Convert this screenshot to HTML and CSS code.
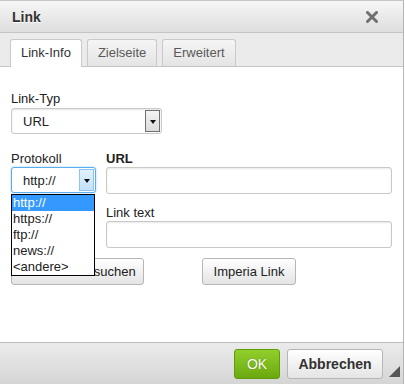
FILE: index.html
```html
<!DOCTYPE html>
<html lang="de">
<head>
    <meta charset="UTF-8">
    <title>Link</title>
    <link rel="stylesheet" href="styles.css">
</head>
<body>
    <div class="dialog">
        <!-- Titelleiste -->
        <div class="title-bar">
            <span class="title">Link</span>
            <svg class="close" width="12" height="12" viewBox="0 0 12 12">
                <path d="M1.5 1.5 L10.5 10.5 M10.5 1.5 L1.5 10.5" stroke="#707070" stroke-width="3" stroke-linecap="round"/>
            </svg>
        </div>

        <!-- Reiter -->
        <div class="tabs">
            <div class="tab active">Link-Info</div>
            <div class="tab">Zielseite</div>
            <div class="tab">Erweitert</div>
        </div>

        <!-- Inhalt -->
        <div class="content">
            <div class="field">
                <label>Link-Typ</label>
                <div class="select type-select">
                    <span>URL</span>
                    <span class="arrow"></span>
                </div>
            </div>

            <div class="url-row">
                <div class="field proto">
                    <label>Protokoll</label>
                    <div class="select proto-select focused">
                        <span>http://</span>
                        <span class="arrow"></span>
                    </div>
                    <ul class="dropdown">
                        <li class="selected">http://</li>
                        <li>https://</li>
                        <li>ftp://</li>
                        <li>news://</li>
                        <li>&lt;andere&gt;</li>
                    </ul>
                </div>
                <div class="url-fields">
                    <div class="field">
                        <label class="bold">URL</label>
                        <div class="input"></div>
                    </div>
                    <div class="field">
                        <label>Link text</label>
                        <div class="input"></div>
                    </div>
                </div>
            </div>

            <div class="button-row">
                <button class="btn browse-btn">Server durchsuchen</button>
                <button class="btn imperia-btn">Imperia Link</button>
            </div>
        </div>

        <!-- Fußzeile -->
        <div class="footer">
            <button class="ok-btn">OK</button>
            <button class="btn cancel-btn">Abbrechen</button>
            <span class="resize"></span>
        </div>
    </div>
</body>
</html>
```

FILE: styles.css
```css
body {
    margin: 0;
    font-family: "Liberation Sans", Arial, sans-serif;
    font-size: 13px;
    color: #222;
    background: #fff;
}
.dialog {
    width: 403px;
    height: 383px;
    border-top: 1px solid #c8c8c8;
    border-right: 1px solid #b5b5b5;
    display: flex;
    flex-direction: column;
    position: relative;
}
.title-bar {
    height: 31px;
    display: flex;
    align-items: center;
    justify-content: space-between;
    padding: 0 25px 0 12px;
    background: linear-gradient(#f6f6f6, #dedede);
    border-bottom: 1px solid #c4c4c4;
}
.title {
    font-weight: bold;
    font-size: 14px;
    color: #333;
    text-shadow: 0 1px 0 #fff;
}
.tabs {
    height: 33px;
    display: flex;
    align-items: flex-end;
    gap: 5px;
    padding-left: 10px;
    background: #ebebeb;
    border-bottom: 1px solid #c4c4c4;
}
.tab {
    height: 26px;
    line-height: 26px;
    padding: 0 10px;
    border: 1px solid #c9c9c9;
    border-bottom: none;
    border-radius: 3px 3px 0 0;
    background: linear-gradient(#f5f5f5, #e4e4e4);
    color: #595959;
}
.tab.active {
    background: #fff;
    color: #333;
    height: 27px;
    margin-bottom: -1px;
}
.content {
    flex: 1;
    padding: 24px 11px 0 11px;
    display: flex;
    flex-direction: column;
}
.field {
    display: flex;
    flex-direction: column;
}
.field label {
    line-height: 16px;
    height: 16px;
    color: #222;
}
.field label.bold {
    font-weight: bold;
}
.select {
    height: 24px;
    border: 1px solid #c9c9c9;
    border-radius: 3px;
    display: flex;
    align-items: center;
    justify-content: space-between;
    padding-left: 11px;
    background: #fff;
    box-shadow: inset 0 1px 2px #e4e4e4;
}
.type-select {
    width: 138px;
    margin-top: 1px;
}
.arrow {
    width: 15px;
    height: 22px;
    margin-right: 1px;
    border: 1px solid #6f6f6f;
    box-sizing: border-box;
    background: linear-gradient(#f4f4f4, #dcdcdc);
    position: relative;
}
.arrow::after {
    content: "";
    position: absolute;
    left: 4px;
    top: 9px;
    border-left: 3px solid transparent;
    border-right: 3px solid transparent;
    border-top: 4px solid #111;
}
.url-row {
    display: flex;
    gap: 10px;
    margin-top: 17px;
}
.proto {
    width: 85px;
    position: relative;
    z-index: 2;
}
.proto-select {
    width: 72px;
}
.select.focused {
    border-color: #5aaef0;
    box-shadow: 0 0 2px #8ccaf7;
}
.focused .arrow {
    border: 1px solid #8cc5f0;
    background: linear-gradient(#e0f1fd, #c2e2fa);
}
.dropdown {
    position: absolute;
    top: 43px;
    left: 0;
    width: 82px;
    margin: 0;
    padding: 0;
    list-style: none;
    border: 1px solid #000;
    background: #fff;
}
.dropdown li {
    height: 16px;
    line-height: 16px;
    padding-left: 1px;
}
.dropdown li.selected {
    background: #3399ff;
    color: #fff;
}
.url-fields {
    display: flex;
    flex-direction: column;
    gap: 11px;
}
.input {
    width: 284px;
    height: 25px;
    border: 1px solid #c9c9c9;
    border-radius: 3px;
    box-shadow: inset 0 1px 2px #e8e8e8;
}
.button-row {
    display: flex;
    gap: 58px;
    margin-top: 10px;
}
.btn {
    font-family: inherit;
    font-size: 13px;
    color: #222;
    height: 27px;
    border: 1px solid #b6b6b6;
    border-radius: 3px;
    background: linear-gradient(#fff, #e4e4e4);
    padding: 0;
}
.browse-btn {
    width: 133px;
}
.imperia-btn {
    width: 94px;
}
.footer {
    height: 41px;
    border-top: 1px solid #bcbcbc;
    background: linear-gradient(#ebebeb, #d5d5d5);
    display: flex;
    align-items: center;
    justify-content: flex-end;
    gap: 7px;
    padding-right: 20px;
    position: relative;
}
.ok-btn {
    width: 46px;
    height: 30px;
    border: 1px solid #5f9c0c;
    border-radius: 3px;
    background: linear-gradient(#92cf2c, #6aa80f);
    color: #fff;
    font-family: inherit;
    font-size: 14px;
    text-shadow: 0 0 1px #4d7f08;
}
.cancel-btn {
    width: 96px;
    height: 30px;
    font-weight: bold;
    font-size: 14px;
    color: #333;
}
.resize {
    position: absolute;
    right: 3px;
    bottom: 7px;
    width: 0;
    height: 0;
    border-left: 11px solid transparent;
    border-bottom: 11px solid #555;
}
```
